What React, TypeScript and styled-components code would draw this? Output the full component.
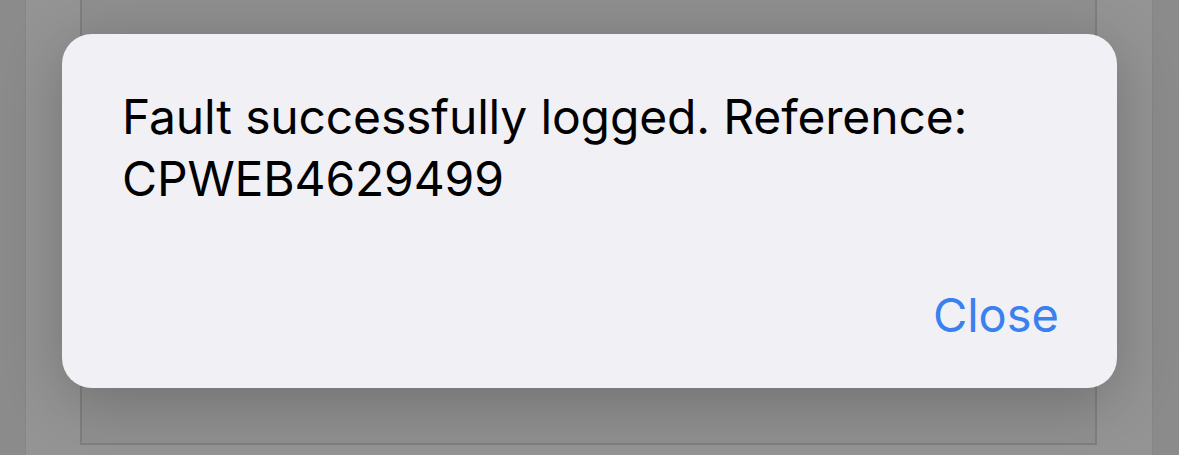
import React from "react";
import styled, { createGlobalStyle } from "styled-components";

const Global = createGlobalStyle`
  html, body {
    margin: 0;
    padding: 0;
    background: #8c8c8c;
    width: 1179px;
    height: 455px;
    overflow: hidden;
  }
  #root { height: 455px; }
`;

const Screen = styled.div`
  position: relative;
  width: 1179px;
  height: 455px;
  display: flex;
  background: #8b8b8b;
  font-family: Inter, "Liberation Sans", sans-serif;
`;

const OuterColumn = styled.div`
  margin-left: 25px;
  width: 1128px;
  height: 455px;
  display: flex;
  justify-content: flex-start;
  background: #949494;
  border-left: 1px solid #868686;
  border-right: 1px solid #868686;
  box-sizing: border-box;
`;

const InnerBox = styled.div`
  margin-left: 54px;
  width: 1017px;
  height: 445px;
  box-sizing: border-box;
  background: #8f8f8f;
  border: 2px solid #7e7e7e;
  border-top: none;
`;

const Alert = styled.div`
  position: absolute;
  left: 62px;
  top: 34px;
  width: 1055px;
  height: 354px;
  box-sizing: border-box;
  border-radius: 30px;
  background: #f0f0f5;
  box-shadow: 0 12px 60px rgba(0, 0, 0, 0.22);
  padding: 52px 60px 42px 60px;
  display: flex;
  flex-direction: column;
  justify-content: space-between;
`;

const Message = styled.p`
  margin: 0;
  font-size: 48px;
  line-height: 62px;
  color: #000;
  font-weight: 400;
  letter-spacing: -0.15px;
`;

const Actions = styled.div`
  display: flex;
  justify-content: flex-end;
`;

const ActionButton = styled.button`
  border: none;
  background: transparent;
  padding: 0;
  margin-right: -2px;
  font-family: inherit;
  font-size: 47px;
  line-height: 62px;
  color: #3b80ef;
  cursor: pointer;
`;

export default function App() {
  return (
    <>
      <Global />
      <Screen>
        <OuterColumn>
          <InnerBox />
        </OuterColumn>
        <Alert>
          <Message>
            Fault successfully logged. Reference:
            <br />
            CPWEB4629499
          </Message>
          <Actions>
            <ActionButton>Close</ActionButton>
          </Actions>
        </Alert>
      </Screen>
    </>
  );
}
